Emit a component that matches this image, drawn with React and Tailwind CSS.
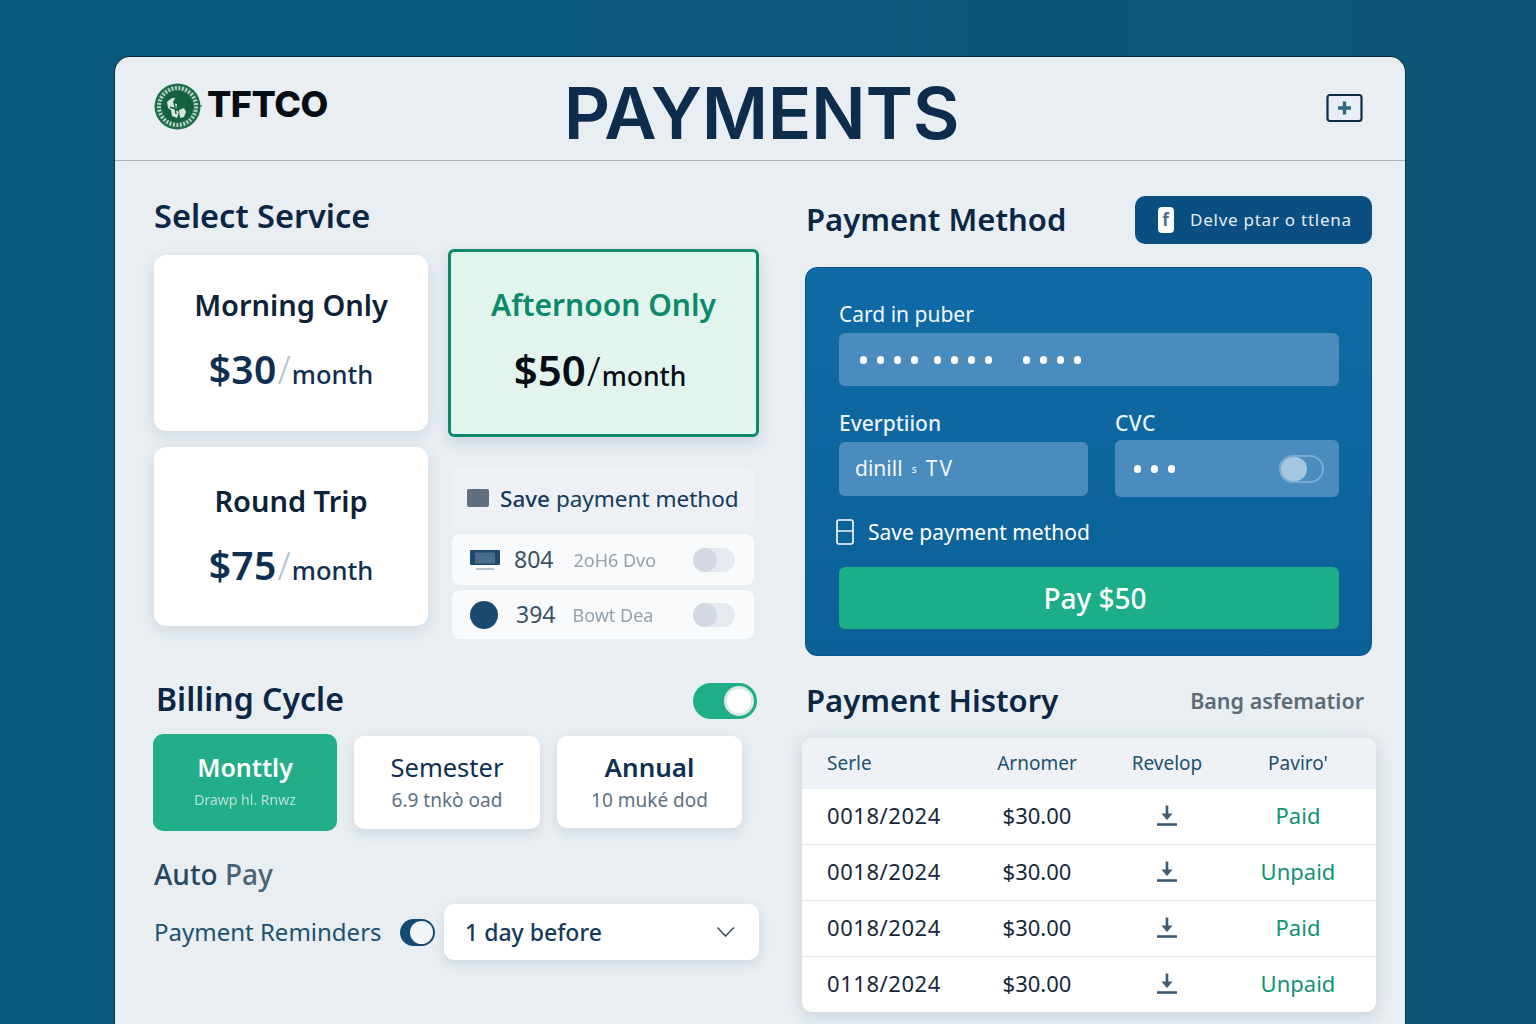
const font = { fontFamily: '"Noto Sans", sans-serif' };

function Logo() {
  return (
    <svg width="48" height="48" viewBox="0 0 48 48" className="shrink-0">
      <circle cx="23.5" cy="23.5" r="23" fill="#1f6d4c" />
      <circle cx="23.5" cy="23.5" r="18.5" fill="none" stroke="#b9d2c5" strokeWidth="4" strokeDasharray="2 1.5" />
      <circle cx="23.5" cy="23.5" r="15.5" fill="#15603f" />
      <path d="M13 19c3-3 6-5 8-4l-2 5 4 1-1 6 3 2-2 6-5-2-1-6-3-2z" fill="#d8e6de" />
      <path d="M25 27l5-2 2 4-2 5-4 1z" fill="#d8e6de" />
      <path d="M20 18l2 13M16 24l8 3" stroke="#15603f" strokeWidth="1.4" />
      <path d="M46 23h3" stroke="#1f6d4c" strokeWidth="1" />
    </svg>
  );
}

function PlusBox() {
  return (
    <svg width="38" height="30" viewBox="0 0 38 30">
      <rect x="1.5" y="2" width="34" height="26" rx="2.5" fill="none" stroke="#0d2a47" strokeWidth="2.2" />
      <path d="M18.5 8.5v13M12 15h13" stroke="#2c6a78" strokeWidth="3.4" />
    </svg>
  );
}

function Download() {
  return (
    <svg width="22" height="24" viewBox="0 0 22 24">
      <path d="M11 1.5v10" stroke="#3d5a70" strokeWidth="2.6" />
      <path d="M5.5 9.5h11L11 16z" fill="#3d5a70" />
      <path d="M1 20.5h20" stroke="#3d5a70" strokeWidth="2.6" />
    </svg>
  );
}

function Chevron() {
  return (
    <svg width="20" height="12" viewBox="0 0 20 12">
      <path d="M1.5 1.5l8 8.5 8.5-8.5" fill="none" stroke="#3d5568" strokeWidth="1.6" />
    </svg>
  );
}

function ScreenIcon() {
  return (
    <svg width="32" height="22" viewBox="0 0 32 22" className="shrink-0">
      <rect x="1" y="1" width="30" height="15" rx="1" fill="#1b4a70" />
      <rect x="6" y="3.5" width="20" height="11" fill="#4a6d8b" />
      <path d="M7 20h18" stroke="#8aa0b3" strokeWidth="1.2" />
    </svg>
  );
}

function PaleToggle() {
  return (
    <div className="relative ml-auto h-6 w-[42px] rounded-full bg-[#e6eaf0]">
      <div className="h-6 w-6 rounded-full bg-[#d3d9e3]" />
    </div>
  );
}

function CheckIcon() {
  return (
    <svg width="18" height="26" viewBox="0 0 18 26" className="shrink-0">
      <rect x="1" y="1" width="16" height="24" rx="2" fill="none" stroke="#fff" strokeWidth="1.6" />
      <path d="M1 12h16" stroke="#fff" strokeWidth="1.4" />
    </svg>
  );
}

function Dots({ count, className }) {
  return (
    <div className={"flex gap-[10px] " + className}>
      {Array.from({ length: count }, (_, i) => (
        <div key={i} className="h-[8px] w-[7px] rounded-full bg-white" />
      ))}
    </div>
  );
}

function PlanCard({ name, price, className }) {
  return (
    <div className={"flex flex-col items-center rounded-xl bg-white shadow-[0_4px_14px_rgba(60,85,115,0.14)] " + className}>
      <div className="text-[29px] leading-[42px] font-semibold text-[#0d2238]">{name}</div>
      <div className="mt-[22px] flex items-baseline text-[#0f2f50]">
        <span className="text-[39px] leading-[42px] font-semibold tracking-[0.3px] text-[#0f2f50]">{price}</span>
        <span className="mx-[1px] text-[38px] leading-[42px] font-light text-[#b6c2cf]">/</span>
        <span className="text-[25.5px] leading-[42px] font-medium">month</span>
      </div>
    </div>
  );
}

function CycleCard({ name, note, className, nameClass }) {
  return (
    <div className={"flex flex-col items-center rounded-[10px] bg-white text-center shadow-[0_4px_12px_rgba(60,85,115,0.14)] " + className}>
      <div className={"leading-9 text-[#0f2f50] " + nameClass}>{name}</div>
      <div className="mt-[3px] text-[19px] leading-6 text-[#5d7183]">{note}</div>
    </div>
  );
}

const payments = [
  ["0018/2024", "Paid"],
  ["0018/2024", "Unpaid"],
  ["0018/2024", "Paid"],
  ["0118/2024", "Unpaid"],
];

export default function App() {
  return (
    <div style={font} className="h-[1024px] w-[1536px] overflow-hidden bg-gradient-to-r from-[#0b5a7e] via-[#0b587a] to-[#0e5676] pt-[56px] pl-[114px]">
      <div className="h-[1100px] w-[1292px] rounded-t-[16px] border-t border-l border-r border-[#0b2b40] bg-[#e8eef2]">
        {/* header */}
        <header className="flex h-[104px] items-center justify-between border-b border-[#aab6c0] pr-[41px] pl-[39px]">
          <div className="flex w-[175px] items-center gap-[5px] pb-[3px]">
            <Logo />
            <span style={{ fontFamily: "Inter, sans-serif" }} className="mb-[6px] text-[36px] leading-none font-extrabold tracking-[-0.5px] text-[#060d14]">TFTCO</span>
          </div>
          <h1 style={{ fontFamily: "Inter, sans-serif" }} className="ml-[68px] pt-[8px] text-[72px] leading-none font-semibold tracking-[-0.3px] text-[#0d2c4e]">PAYMENTS</h1>
          <div className="mb-[2px] ml-[200px]"><PlusBox /></div>
        </header>

        {/* body */}
        <div className="flex pt-[35px] pr-[34px] pl-[39px]">
          {/* left column */}
          <div className="w-[605px]">
            <h2 className="-mt-[1px] pb-[1px] text-[32.5px] leading-[42px] font-semibold text-[#0b2745]">Select Service</h2>
            <div className="mt-[11px] grid grid-cols-[274px_311px] gap-x-5">
              <div className="flex flex-col gap-4 pt-[6px]">
                <PlanCard name="Morning Only" price="$30" className="h-[176px] pt-[29px]" />
                <PlanCard name="Round Trip" price="$75" className="h-[179px] pt-[33px]" />
              </div>
              <div>
                <div className="flex h-[188px] flex-col items-center rounded-[6px] border-[3px] border-[#0b8a6b] bg-[#e2f4ee] pt-[32px] shadow-[0_6px_14px_rgba(60,85,115,0.16)]">
                  <div className="text-[30px] leading-[42px] font-semibold text-[#0b8a6b]">Afternoon Only</div>
                  <div className="mt-[23px] -ml-[7px] flex items-baseline text-[#060d14]">
                    <span className="text-[42px] leading-[42px] font-semibold">$50</span>
                    <span className="mx-[1px] text-[40px] leading-[42px] font-light">/</span>
                    <span className="text-[26.5px] leading-[42px] font-medium">month</span>
                  </div>
                </div>
                <div className="mt-[29px] mr-[5px] ml-1 flex flex-col gap-[5px]">
                  <div className="flex h-[63px] items-center gap-[11px] rounded-lg bg-[#edf1f5] pl-[15px]">
                    <div className="h-[18px] w-[22px] rounded-[2px] bg-[#5f6f7f]" />
                    <span className="pt-[3px] text-[22.5px] text-[#143a5c]"><span className="font-medium">Save</span> payment method</span>
                  </div>
                  <div className="flex h-[51px] items-center rounded-lg bg-[#f8fafb] pr-[19px] pl-[17px]">
                    <ScreenIcon />
                    <span className="ml-[13px] text-[23px] text-[#3a5266]">804</span>
                    <span className="ml-5 pt-[2px] text-[18px] text-[#94a2ae] blur-[0.5px]">2oH6 Dvo</span>
                    <PaleToggle />
                  </div>
                  <div className="flex h-[49px] items-center rounded-lg bg-[#f8fafb] pr-[19px] pl-[18px]">
                    <div className="h-[28px] w-[28px] shrink-0 rounded-full bg-[#1b4a70]" />
                    <span className="ml-[18px] text-[23px] text-[#3a5266]">394</span>
                    <span className="ml-[17px] pt-[2px] text-[18px] text-[#94a2ae] blur-[0.5px]">Bowt Dea</span>
                    <PaleToggle />
                  </div>
                </div>
              </div>
            </div>

            <div className="mt-[39px] flex items-center justify-between pr-[2px] pl-[2px]">
              <h2 className="text-[32px] leading-[42px] font-semibold text-[#0b2745]">Billing Cycle</h2>
              <div className="mt-[4px] flex h-9 w-16 items-center justify-end rounded-full bg-[#1fae88] pr-[3px]">
                <div className="h-[30px] w-[30px] rounded-full border-[3px] border-[#dfe9e8] bg-white" />
              </div>
            </div>
            <div className="mt-[14px] flex items-start">
              <div className="-ml-[1px] flex h-[97px] w-[184px] flex-col items-center rounded-[10px] bg-[#22ae88] pt-[15px] text-center">
                <div className="text-[25px] leading-9 font-semibold text-white">Monttly</div>
                <div className="mt-[5px] text-[14px] leading-5 text-[#b7e3d3] blur-[0.5px]">Drawp hl. Rnwz</div>
              </div>
              <CycleCard name="Semester" note="6.9 tnkò oad" className="mt-[2px] ml-[17px] h-[93px] w-[186px] pt-[13px]" nameClass="text-[25.5px] font-normal" />
              <CycleCard name="Annual" note="10 muké dod" className="mt-[2px] ml-[17px] h-[92px] w-[185px] pt-[13px]" nameClass="text-[26px] font-semibold" />
            </div>
            <div className="mt-[22px] text-[28px] leading-[42px] font-medium text-[#4a6377]"><span className="text-[#274660]">Auto</span> Pay</div>
            <div className="mt-[9px] flex items-center">
              <span className="w-[246px] text-[24px] leading-[56px] text-[#23506f]">Payment Reminders</span>
              <div className="flex h-[27px] w-[35px] items-center justify-end rounded-full bg-[#134a74] pr-[2px]">
                <div className="h-[23px] w-[23px] rounded-full bg-[#f3f6f8]" />
              </div>
              <div className="ml-[9px] flex h-[56px] w-[315px] items-center justify-between rounded-[10px] bg-white pr-[23px] pl-[21px] shadow-[0_4px_12px_rgba(60,85,115,0.14)]">
                <span className="text-[23px] font-medium text-[#143a5c]">1 day before</span>
                <Chevron />
              </div>
            </div>
          </div>

          {/* right column */}
          <div className="ml-[46px] w-[567px]">
            <div className="flex h-[48px] items-center justify-between pl-[1px]">
              <h2 className="pb-[2px] text-[31px] leading-[42px] font-semibold text-[#0b2745]">Payment Method</h2>
              <div className="flex h-[48px] w-[237px] items-center gap-[16px] rounded-[10px] bg-[#0b4f82] pl-[23px] text-[17px] tracking-[0.75px] text-[#e3edf4]">
                <span className="flex h-[26px] w-[16px] items-center justify-center rounded-[4px] bg-white text-[17px] font-bold text-[#4a6d96]">f</span>
                <span>Delve ptar o ttlena</span>
              </div>
            </div>

            <div className="mt-[23px] h-[389px] rounded-[12px] border border-[#0a5288] bg-gradient-to-b from-[#0f6ba6] to-[#0c6098] pt-[29px] pr-[32px] pl-[33px]">
              <div className="text-[21px] leading-[34px] text-[#f2f7fb]">Card in puber</div>
              <div className="mt-[2px] flex h-[53px] items-center rounded-[6px] bg-[#4b8cbf] pl-[21px]">
                <Dots count={4} />
                <Dots count={4} className="ml-[16px]" />
                <Dots count={4} className="ml-[31px]" />
              </div>
              <div className="mt-[20px] flex gap-[27px]">
                <div className="w-[249px]">
                  <div className="text-[21px] leading-[34px] font-medium text-[#eaf2f8]">Everptiion</div>
                  <div className="mt-[2px] flex h-[54px] items-center rounded-[6px] bg-[#4b8cbf] pl-4 text-[21px] text-[#f2f7fb]">dinill <span className="mx-[9px] text-[11px]">s</span> <span className="tracking-[2px]">TV</span></div>
                </div>
                <div className="w-[224px]">
                  <div className="text-[21px] leading-[34px] font-medium tracking-[0.5px] text-[#eaf2f8]">CVC</div>
                  <div className="flex h-[57px] items-center justify-between rounded-[6px] bg-[#4b8cbf] pr-[15px] pl-[19px]">
                    <Dots count={3} className="gap-[8px]" />
                    <div className="h-[28px] w-[45px] rounded-full border-2 border-[#7aaad0]">
                      <div className="h-full w-[26px] rounded-full bg-[#a5c6e0]" />
                    </div>
                  </div>
                </div>
              </div>
              <div className="mt-[22px] -ml-[3px] flex h-[26px] items-center gap-[14px] text-[21px] text-white">
                <CheckIcon />
                <span className="pt-[2px]">Save payment method</span>
              </div>
              <div className="mt-[22px] flex h-[62px] items-center justify-center rounded-[6px] bg-[#1cae88] pl-[12px] text-[28px] font-medium text-white">Pay $50</div>
            </div>

            <div className="mt-[25px] flex h-[42px] items-center justify-between pr-[8px] pl-[1px]">
              <h2 className="pb-[4px] text-[31px] leading-[42px] font-semibold text-[#0b2745]">Payment History</h2>
              <span className="pb-[2px] text-[21.5px] font-semibold text-[#5b6b78]">Bang asfematior</span>
            </div>
            <div className="mt-[15px] -mr-1 -ml-[3px] overflow-hidden rounded-[10px] bg-white shadow-[0_4px_16px_rgba(60,85,115,0.18)]">
              <div className="grid h-[51px] grid-cols-[175px_120px_140px_122px] items-center bg-[#eef2f7] text-[19px] text-[#23506f]">
                <span className="pl-[25px]">Serle</span>
                <span className="text-center">Arnomer</span>
                <span className="text-center">Revelop</span>
                <span className="text-center">Paviro'</span>
              </div>
              {payments.map(([date, status], i) => (
                <div key={i} className="grid h-[56px] grid-cols-[175px_120px_140px_122px] items-center border-b border-[#dfe6ef] pb-[2px] text-[22px] text-[#16283a] last:h-[55px] last:border-b-0">
                  <span className="pl-[25px] tracking-[0.55px]">{date}</span>
                  <span className="text-center">$30.00</span>
                  <span className="flex justify-center"><Download /></span>
                  <span className="text-center text-[#109274]">{status}</span>
                </div>
              ))}
            </div>
          </div>
        </div>
      </div>
    </div>
  );
}
